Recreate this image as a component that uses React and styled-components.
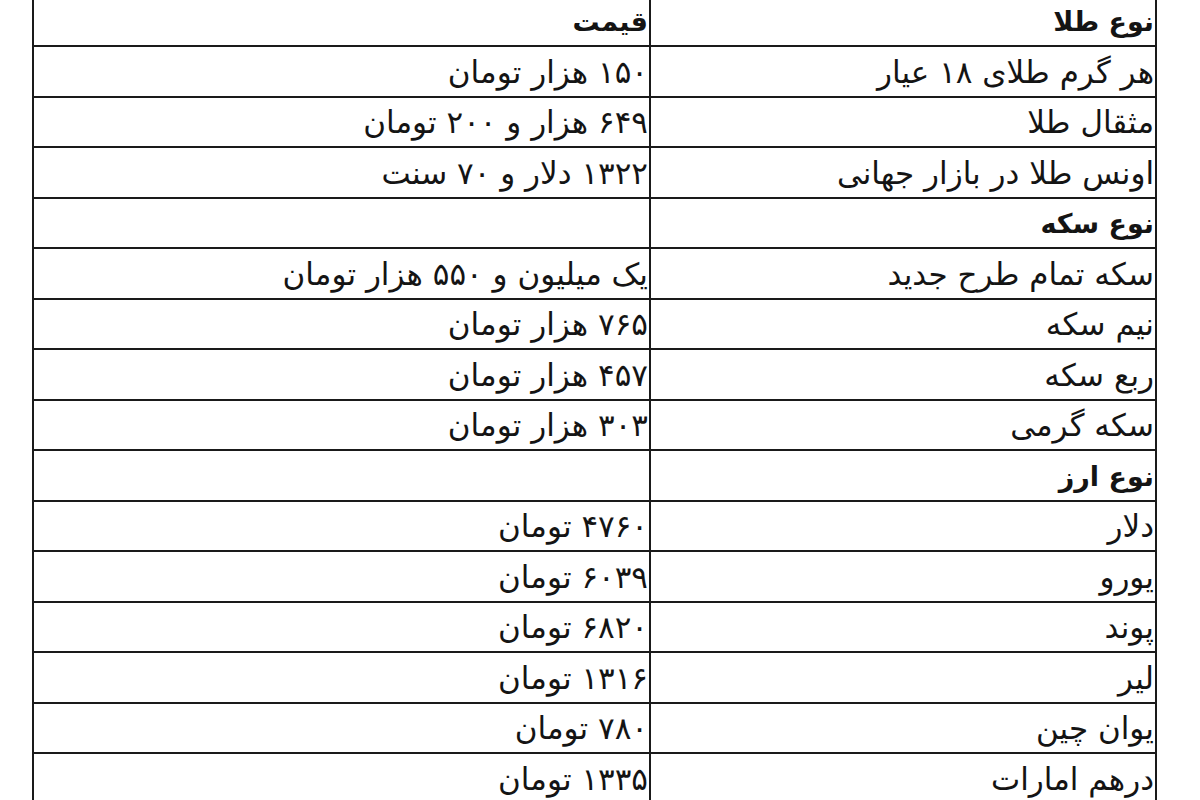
import React from "react";
import styled, { createGlobalStyle } from "styled-components";

const Global = createGlobalStyle`
  html, body { margin: 0; padding: 0; background: #fff; }
  body { font-family: "DejaVu Sans", sans-serif; color: #141414; }
`;

const Page = styled.div`
  width: 1200px;
  height: 800px;
  overflow: hidden;
  padding-left: 32px;
  box-sizing: border-box;
`;

const Table = styled.div`
  direction: rtl;
  width: 1125px;
  border-left: 2px solid #1a1a1a;
  border-right: 2px solid #1a1a1a;
  box-sizing: border-box;
`;

const Row = styled.div`
  display: grid;
  grid-template-columns: 506px 1fr;
  height: ${(p) => (p.$head ? "47px" : "50.5px")};
  border-bottom: 2px solid #1a1a1a;
  box-sizing: border-box;
`;

const Cell = styled.div`
  display: flex;
  align-items: flex-end;
  justify-content: flex-start;
  padding: 0 1px ${(p) => (p.$bold ? "10px" : "8px")} 0;
  font-size: ${(p) => (p.$bold ? "27px" : "31px")};
  font-weight: ${(p) => (p.$bold ? 700 : 400)};
  line-height: 1;
  white-space: nowrap;
  overflow: hidden;
  border-left: ${(p) => (p.$divider ? "2px solid #1a1a1a" : "none")};
`;

const rows = [
  { name: "نوع طلا", price: "قیمت", head: true, bold: true },
  { name: "هر گرم طلای ۱۸ عیار", price: "۱۵۰ هزار تومان" },
  { name: "مثقال طلا", price: "۶۴۹ هزار و ۲۰۰ تومان" },
  { name: "اونس طلا در بازار جهانی", price: "۱۳۲۲ دلار و ۷۰ سنت" },
  { name: "نوع سکه", price: "", bold: true },
  { name: "سکه تمام طرح جدید", price: "یک میلیون و ۵۵۰ هزار تومان" },
  { name: "نیم سکه", price: "۷۶۵ هزار تومان" },
  { name: "ربع سکه", price: "۴۵۷ هزار تومان" },
  { name: "سکه گرمی", price: "۳۰۳ هزار تومان" },
  { name: "نوع ارز", price: "", bold: true },
  { name: "دلار", price: "۴۷۶۰ تومان" },
  { name: "یورو", price: "۶۰۳۹ تومان" },
  { name: "پوند", price: "۶۸۲۰ تومان" },
  { name: "لیر", price: "۱۳۱۶ تومان" },
  { name: "یوان چین", price: "۷۸۰ تومان" },
  { name: "درهم امارات", price: "۱۳۳۵ تومان" },
];

export default function App() {
  return (
    <>
      <Global />
      <Page>
        <Table>
          {rows.map((r, i) => (
            <Row key={i} $head={r.head}>
              <Cell $divider $bold={r.bold}>{r.name}</Cell>
              <Cell $bold={r.head}>{r.price}</Cell>
            </Row>
          ))}
        </Table>
      </Page>
    </>
  );
}
